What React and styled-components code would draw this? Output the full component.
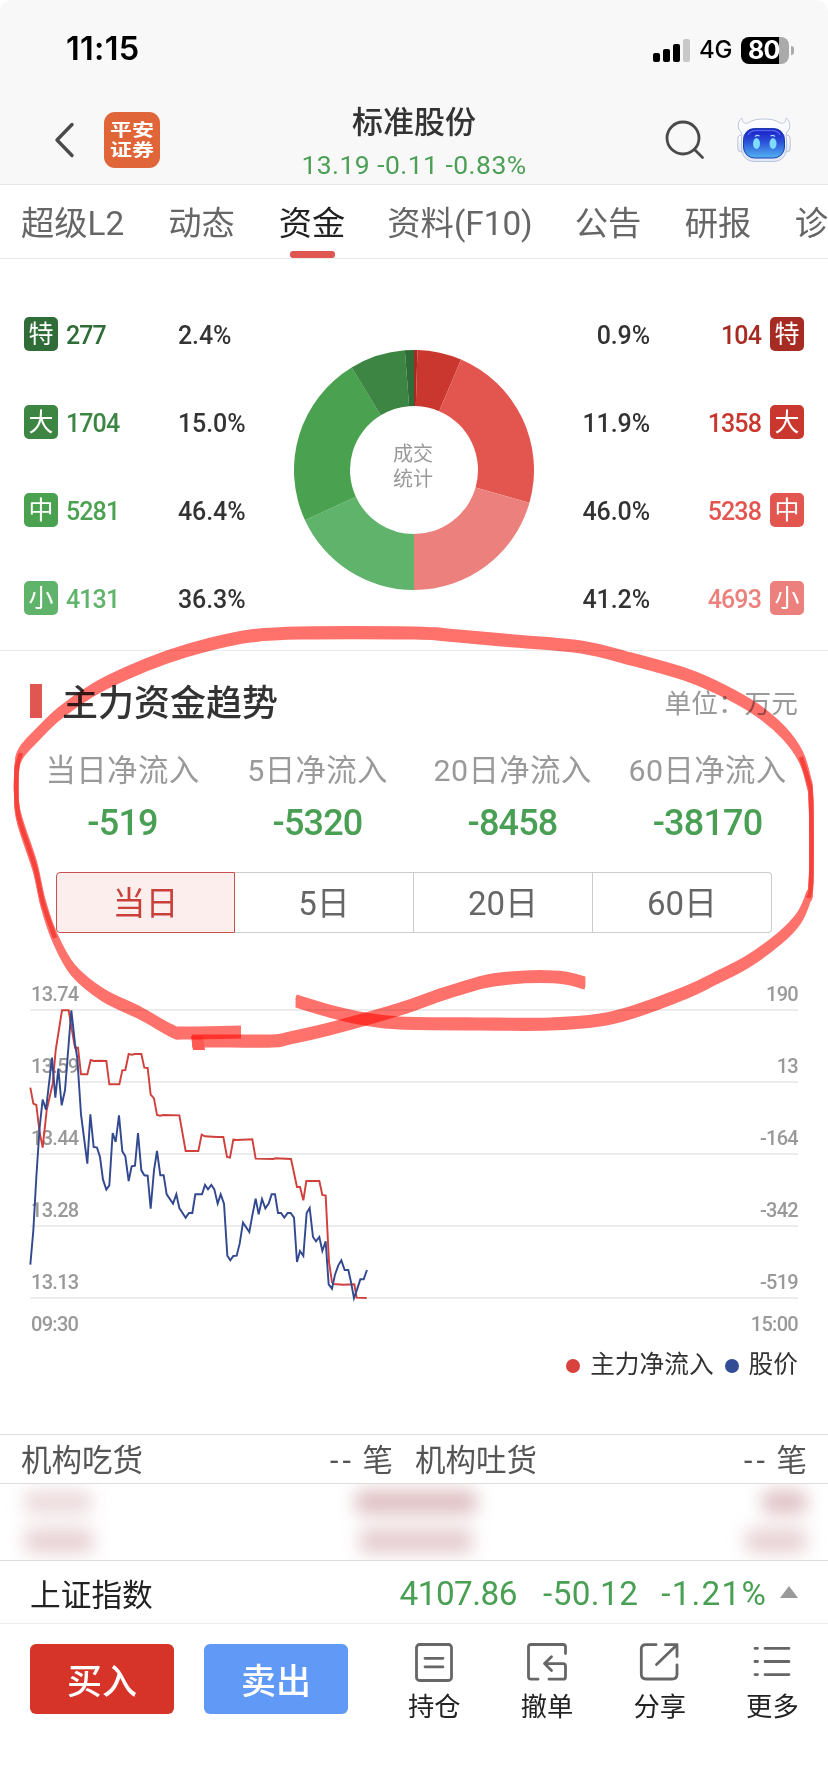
import React from 'react';
// Vendor
import styled, { createGlobalStyle } from 'styled-components';

const GlobalStyle = createGlobalStyle`
  * {
    box-sizing: border-box;
  }
  body {
    margin: 0;
    background: #fff;
    color: #333;
    font-family: Roboto, 'Noto Sans CJK SC', sans-serif;
  }
`;

const Screen = styled.div`
  position: relative;
  display: flex;
  flex-direction: column;
  width: 828px;
  height: 1792px;
  overflow: hidden;
  background: #fff;
  white-space: nowrap;
`;

// Status bar
const StatusBar = styled.div`
  display: flex;
  align-items: center;
  justify-content: space-between;
  height: 100px;
  padding: 0 34px 0 66px;
  background: #f8f8f8;
  border-radius: 12px 12px 0 0;
  color: #000;
  font-family: Inter, sans-serif;
`;

const Clock = styled.span`
  padding-bottom: 1px;
  font-size: 32.5px;
  font-weight: 600;
  line-height: 1;
  letter-spacing: 0.3px;
`;

const StatusIcons = styled.div`
  display: flex;
  align-items: center;
  gap: 9px;
`;

const Signal = styled.div`
  display: flex;
  align-items: flex-end;
  gap: 3px;
  height: 23px;
`;

const SignalBar = styled.i`
  width: 7px;
  height: ${(p) => p.$h}px;
  border-radius: 2px;
  background: ${(p) => (p.$off ? '#c8c8c8' : '#000')};
`;

const Network = styled.span`
  width: 33px;
  font-size: 24px;
  font-weight: 500;
  line-height: 1;
  letter-spacing: -0.3px;
`;

const Battery = styled.div`
  display: flex;
  align-items: center;
  gap: 2px;
`;

const BatteryBody = styled.div`
  width: 48px;
  height: 27px;
  padding-left: 7px;
  border-radius: 8px;
  background: linear-gradient(90deg, #000 38px, #aaa 38px);
  color: #fff;
  font-size: 25px;
  font-weight: 700;
  line-height: 27px;
  letter-spacing: -0.8px;
`;

const BatteryTip = styled.i`
  width: 3px;
  height: 9px;
  border-radius: 0 4px 4px 0;
  background: #aaa;
`;

// Navigation
const NavBar = styled.div`
  display: grid;
  grid-template-columns: 1fr auto 1fr;
  height: 85px;
  padding: 0 37px 0 53px;
  border-bottom: 1px solid #e6e6e6;
  background: #f8f8f8;
`;

const NavSide = styled.div`
  display: flex;
  align-items: center;
  justify-content: ${(p) => (p.$end ? 'flex-end' : 'flex-start')};
  gap: ${(p) => (p.$end ? 31 : 28)}px;
  height: 80px;
`;

const Logo = styled.div`
  display: flex;
  flex-direction: column;
  align-items: center;
  justify-content: center;
  width: 56px;
  height: 56px;
  border-radius: 11px;
  background: #e0663a;
`;

const LogoText = styled.div`
  color: #fff;
  font-size: 22px;
  font-weight: 700;
  line-height: 25px;
  transform: scaleY(0.8);
`;

const TitleBlock = styled.div`
  display: flex;
  flex-direction: column;
  align-items: center;
  margin-left: -16px;
  padding-top: 2px;
`;

const StockName = styled.div`
  font-size: 31px;
  font-weight: 500;
  line-height: 42px;
`;

const StockQuote = styled.div`
  color: #4b9f56;
  font-size: 26.5px;
  line-height: 42px;
  letter-spacing: 0.45px;
`;

// Tabs
const Tabs = styled.div`
  display: flex;
  gap: 44px;
  height: 74px;
  padding-left: 21px;
  border-bottom: 1px solid #ebebeb;
`;

const Tab = styled.div`
  display: flex;
  flex-direction: column;
  align-items: center;
  flex: none;
  width: ${(p) => p.$w}px;
  height: 73px;
  color: ${(p) => (p.$active ? '#222' : '#666')};
  font-size: 33.3px;
  line-height: 78px;
`;

const TabLine = styled.i`
  width: 45px;
  height: 7px;
  margin-top: -12px;
  border-radius: 3px;
  background: #e05650;
`;

// Deal statistics
const DealPanel = styled.div`
  display: grid;
  grid-template-columns: 270px 240px 1fr;
  height: 392px;
  padding: 31px 24px 0;
  border-bottom: 1px solid #ebebeb;
`;

const DealColumn = styled.div`
  display: flex;
  flex-direction: column;
`;

const DealRow = styled.div`
  display: flex;
  flex-direction: ${(p) => (p.$right ? 'row-reverse' : 'row')};
  align-items: center;
  height: 88px;
`;

const Badge = styled.span`
  width: 34px;
  height: 34px;
  border-radius: 5px;
  background: ${(p) => p.$color};
  color: #fff;
  font-size: 25px;
  line-height: 35px;
  text-align: center;
`;

const DealCount = styled.span`
  width: 103px;
  margin: 0 9px 0 8px;
  padding-top: 2px;
  color: ${(p) => p.$color};
  font-size: 25px;
  font-weight: 500;
  letter-spacing: -0.9px;
  text-align: ${(p) => (p.$right ? 'right' : 'left')};
`;

const DealRate = styled.span`
  padding-top: 2px;
  color: #333;
  font-size: 25px;
  font-weight: 500;
  letter-spacing: -0.1px;
`;

const DonutBox = styled.div`
  display: grid;
  place-items: center;
  height: 240px;
  margin-top: 60px;

  > * {
    grid-area: 1 / 1;
  }
`;

const DonutLabel = styled.div`
  margin: -7px 2px 0 0;
  color: #999;
  font-size: 20px;
  line-height: 25px;
  text-align: center;
`;

// Fund trend
const TrendHead = styled.div`
  display: flex;
  align-items: center;
  height: 100px;
  padding: 0 30px;
`;

const Mark = styled.i`
  width: 12px;
  height: 34px;
  margin-right: 20px;
  background: #e05650;
`;

const TrendTitle = styled.h2`
  flex: 1;
  margin: 0;
  padding-bottom: 3px;
  color: #333;
  font-size: 36px;
  font-weight: 500;
`;

const Unit = styled.span`
  color: #999;
  font-size: 26.7px;
`;

const Stats = styled.div`
  display: grid;
  grid-template-columns: repeat(4, 1fr);
  height: 121px;
  padding: 1px 23px 0 25px;
  text-align: center;
`;

const StatLabel = styled.div`
  color: #999;
  font-size: 30.4px;
  line-height: 38px;
  letter-spacing: 0.4px;
`;

const StatValue = styled.div`
  color: #499f54;
  font-size: 36px;
  font-weight: 500;
  line-height: 66px;
  letter-spacing: -0.8px;
`;

const Periods = styled.div`
  display: grid;
  grid-template-columns: repeat(4, 179px);
  height: 61px;
  margin: 0 56px;
`;

const Period = styled.button`
  margin: 0;
  padding: 0 0 4px;
  border: 1px solid ${(p) => (p.$active ? '#c9524e' : '#ccc')};
  border-left-width: ${(p) => (p.$active ? 1 : 0)}px;
  border-radius: ${(p) => (p.$active ? '4px 0 0 4px' : 0)};
  background: ${(p) => (p.$active ? '#fbeeed' : '#fff')};
  color: ${(p) => (p.$active ? '#c9403b' : '#666')};
  font: 400 33px Roboto, 'Noto Sans CJK SC', sans-serif;

  &:last-child {
    border-radius: 0 4px 4px 0;
  }
`;

// Chart
const Chart = styled.div`
  position: relative;
  margin: 6px 30px 0;
`;

const GridRow = styled.div`
  display: flex;
  align-items: flex-end;
  justify-content: space-between;
  height: 72px;
  padding: 0 0 3px 1px;
  border-bottom: 2px solid #ececec;
  color: #999;
  font-size: 20px;
  font-weight: 500;
  letter-spacing: -0.7px;
`;

const Lines = styled.svg`
  position: absolute;
  left: 0;
  top: 71px;
  overflow: visible;
`;

const TimeRow = styled.div`
  display: flex;
  justify-content: space-between;
  padding: 0 0 0 1px;
  color: #999;
  font-size: 20px;
  font-weight: 500;
  line-height: 51px;
  letter-spacing: -0.7px;
`;

const Legend = styled.div`
  display: flex;
  align-items: center;
  justify-content: flex-end;
  height: 32px;
  color: #333;
  font-size: 24.7px;
  line-height: 30px;
`;

const LegendText = styled.span`
  padding-bottom: 2px;
`;

const Dot = styled.i`
  width: 14px;
  height: 14px;
  margin: 0 10px 0 11px;
  border-radius: 50%;
  background: ${(p) => p.$color};
`;

// Institution rows
const InstRow = styled.div`
  display: grid;
  grid-template-columns: 372px 1fr;
  gap: 22px;
  height: 50px;
  margin-top: 52px;
  padding: 0 21px;
  border-top: 1px solid #ddd;
  border-bottom: 1px solid #ddd;
  color: #555;
  font-size: 30.5px;
  line-height: 51px;
`;

const InstCell = styled.div`
  display: flex;
  justify-content: space-between;
`;

const Dashes = styled.span`
  letter-spacing: 4px;
`;

const Masked = styled.div`
  display: flex;
  flex-direction: column;
  justify-content: space-between;
  height: 76px;
  padding: 6px 21px 7px 24px;
  overflow: hidden;
`;

const MaskedRow = styled.div`
  display: grid;
  grid-template-columns: 1fr auto 1fr;
  align-items: center;
`;

const Smudge = styled.i`
  justify-self: ${(p) => p.$at || 'start'};
  width: ${(p) => p.$w}px;
  height: 24px;
  border-radius: 8px;
  background: rgba(176, 100, 108, ${(p) => p.$a});
  filter: blur(9px);
`;

// Index line
const IndexRow = styled.div`
  display: flex;
  align-items: center;
  height: 64px;
  padding: 0 30px;
  border-top: 1px solid #ddd;
  border-bottom: 1px solid #ebebeb;
`;

const IndexName = styled.span`
  flex: 1;
  color: #222;
  font-size: 30.7px;
`;

const IndexValue = styled.span`
  margin-right: ${(p) => p.$gap}px;
  padding-top: 2px;
  color: #499f54;
  font-size: 33.3px;
  letter-spacing: ${(p) => p.$spacing}px;
`;

const Caret = styled.i`
  border: 9px solid transparent;
  border-top: 0;
  border-bottom: 12px solid #999;
`;

// Bottom bar
const BottomBar = styled.div`
  display: flex;
  padding: 20px 0 0 30px;
`;

const TradeButton = styled.button`
  flex: none;
  width: 144px;
  height: 70px;
  margin-right: 30px;
  padding: 0 0 2px;
  border: 0;
  border-radius: 6px;
  background: ${(p) => p.$color};
  color: #fff;
  font: 500 35px 'Noto Sans CJK SC', sans-serif;
`;

const Actions = styled.div`
  display: flex;
`;

const Action = styled.div`
  display: flex;
  flex-direction: column;
  align-items: center;
  flex: none;
  width: 112.7px;
  margin-top: -6px;
  color: #222;
  font-size: 26.3px;
  line-height: 42px;
`;

const Marker = styled.svg`
  position: absolute;
  left: 0;
  top: 0;
  mix-blend-mode: multiply;
  pointer-events: none;
`;

const tabs = [
  { name: '超级L2', w: 103 },
  { name: '动态', w: 67 },
  { name: '资金', w: 66, active: true },
  { name: '资料(F10)', w: 142 },
  { name: '公告', w: 66 },
  { name: '研报', w: 66 },
  { name: '诊', w: 33 },
];

const sells = [
  { tag: '特', count: 277, rate: '2.4%', color: '#2f6c38' },
  { tag: '大', count: 1704, rate: '15.0%', color: '#3d8542' },
  { tag: '中', count: 5281, rate: '46.4%', color: '#4aa14f' },
  { tag: '小', count: 4131, rate: '36.3%', color: '#5fb36a' },
];

const buys = [
  { tag: '特', count: 104, rate: '0.9%', color: '#a62b23' },
  { tag: '大', count: 1358, rate: '11.9%', color: '#c9372f' },
  { tag: '中', count: 5238, rate: '46.0%', color: '#e35650' },
  { tag: '小', count: 4693, rate: '41.2%', color: '#ec807c' },
];

const stats = [
  ['当日净流入', '-519'],
  ['5日净流入', '-5320'],
  ['20日净流入', '-8458'],
  ['60日净流入', '-38170'],
];

const axis = [
  ['13.74', '190'],
  ['13.59', '13'],
  ['13.44', '-164'],
  ['13.28', '-342'],
  ['13.13', '-519'],
];

const inflow =
  '91,382 100,430 109,434 118,510 128,562 140,450 158,370 167,270 186,150 206,150 215,205 225,262 234,262 243,342 262,342 272,299 281,302 300,301 319,302 328,372 358,372 367,330 376,329 386,281 395,283 405,281 424,281 433,322 443,323 452,403 462,414 471,464 480,466 490,464 538,465 557,572 595,572 605,523 615,528 650,530 670,530 681,590 690,592 700,538 710,539 757,537 767,595 820,596 826,594 873,596 891,680 900,680 910,720 919,662 958,662 967,704 977,706 987,905 996,965 1001,971 1030,973 1063,972 1070,1012 1100,1013';

const price =
  '91,913 100,810 109,650 119,500 128,418 138,448 156,292 166,412 175,325 185,435 195,390 214,150 225,250 232,295 243,462 262,610 271,462 281,560 291,562 300,590 309,658 319,688 328,675 338,518 347,545 357,465 367,573 376,588 386,662 395,618 405,616 414,518 424,630 433,645 443,646 452,745 462,630 471,572 481,645 491,645 500,702 519,730 529,702 538,743 557,772 567,758 577,758 586,702 606,702 615,674 624,687 634,674 643,687 653,730 662,702 672,730 682,886 691,900 700,887 710,886 719,850 729,787 748,815 758,760 767,715 776,762 786,716 796,744 806,730 815,702 825,702 834,758 843,758 853,772 863,758 872,758 882,772 891,905 900,872 910,887 920,758 929,743 939,830 948,843 958,830 967,872 977,843 986,972 996,985 1005,943 1015,915 1024,900 1034,929 1045,929 1053,965 1062,1014 1072,985 1081,957 1091,957 1101,929';

const loop = [
  [296, 1001], [333, 1012], [365, 1019], [400, 1023], [480, 1024], [550, 1024], [600, 1020],
  [633, 1012], [687, 992], [714, 979], [747, 962], [780, 938], [799, 918], [808, 898],
  [811, 883], [811, 800], [809, 783], [801, 757], [784, 733], [757, 710], [724, 691],
  [687, 675], [631, 659], [581, 647], [514, 641], [447, 635], [414, 633], [300, 633],
  [250, 636], [207, 645], [167, 657], [127, 673], [93, 690], [60, 713], [37, 735],
  [21, 753], [16.7, 770], [17, 807], [22, 828], [35, 867], [43, 903], [55, 938],
  [73, 970], [103, 995], [140, 1013], [172, 1031], [184, 1033], [241, 1032],
];

const tail = [
  [192, 1041], [230, 1041], [273, 1041], [290, 1038], [333, 1028], [400, 1009],
  [440, 995], [483, 982], [510, 978], [540, 976.5], [565, 978], [585, 983],
];

// Catmull-Rom spline through the points
function smooth(pts) {
  let d = `M${pts[0]}`;
  for (let i = 0; i < pts.length - 1; i++) {
    const a = pts[i - 1] || pts[i];
    const b = pts[i];
    const c = pts[i + 1];
    const e = pts[i + 2] || c;
    d += `C${b[0] + (c[0] - a[0]) / 6},${b[1] + (c[1] - a[1]) / 6} ${c[0] - (e[0] - b[0]) / 6},${c[1] - (e[1] - b[1]) / 6} ${c}`;
  }
  return d;
}

// Flat pen nib: tall and narrow, so upright parts come out thin
function Nib({ points, children }) {
  const d = smooth(points);
  return (
    <Marker width="828" height="1792" fill="none" stroke="#ff726c" strokeWidth="4.4">
      {[-4.4, -3, -1.5, 0, 1.5, 3, 4.4].map((dy) => (
        <path key={dy} d={d} transform={`translate(0 ${dy})`} />
      ))}
      {children}
    </Marker>
  );
}

function slice(from, to, r1, r2) {
  const at = (deg, r) => {
    const a = (deg * Math.PI) / 180;
    return `${120 + r * Math.sin(a)},${120 - r * Math.cos(a)}`;
  };
  return `M${at(from, r2)}A${r2},${r2} 0 0 1 ${at(to, r2)}L${at(to, r1)}A${r1},${r1} 0 0 0 ${at(from, r1)}Z`;
}

function Donut() {
  const parts = [...buys, ...[...sells].reverse()];
  const total = parts.reduce((sum, p) => sum + p.count, 0);
  let angle = 0;
  return (
    <svg width="240" height="240">
      {parts.map((p) => {
        const from = angle;
        angle += (p.count / total) * 360;
        return <path key={p.color} d={slice(from, angle, 64, 120)} fill={p.color} />;
      })}
    </svg>
  );
}

function Deals({ items, right }) {
  return (
    <DealColumn>
      {items.map((d) => (
        <DealRow key={d.tag} $right={right}>
          <Badge $color={d.color}>{d.tag}</Badge>
          <DealCount $color={d.color} $right={right}>{d.count}</DealCount>
          <DealRate>{d.rate}</DealRate>
        </DealRow>
      ))}
    </DealColumn>
  );
}

function Robot() {
  return (
    <svg width="54" height="46" viewBox="0 0 54 46">
      <defs>
        <linearGradient id="face" x1="0" y1="0" x2="0" y2="1">
          <stop offset="0" stopColor="#1a18c4" />
          <stop offset="0.45" stopColor="#2a50d8" />
          <stop offset="1" stopColor="#52b4f2" />
        </linearGradient>
        <linearGradient id="shell" x1="0" y1="0" x2="0" y2="1">
          <stop offset="0" stopColor="#fff" />
          <stop offset="1" stopColor="#dfe6f5" />
        </linearGradient>
      </defs>
      <g fill="url(#shell)" stroke="#b5bfd6" strokeWidth="0.9">
        <rect x="0.8" y="18" width="8" height="17" rx="3.5" />
        <rect x="45.2" y="18" width="8" height="17" rx="3.5" />
        <path d="M5 1C1 4 0 10 3 14C5 16 5 18 4.500 22V31C5 40 10 44.500 18 44.500H36C44 44.500 49 40 49.500 31V22C49 18 49 16 51 14C54 10 53 4 49 1C49 5 47 7 43 6C39 3 34 2 27 2S15 3 11 6C7 7 5 5 5 1Z" />
      </g>
      <rect x="6.500" y="11.500" width="41" height="29.500" rx="11" fill="url(#face)" stroke="#1c3fae" strokeWidth="1" />
      <path d="M11 18Q13 13.500 19 13.500H35Q41 13.500 43 18" fill="none" stroke="#5266ee" strokeWidth="1.500" />
      <ellipse cx="19.500" cy="26.500" rx="3.500" ry="5.400" fill="#7fdcff" />
      <ellipse cx="36" cy="26.500" rx="3.500" ry="5.400" fill="#7fdcff" />
      <path d="M18 19.500Q20 17.500 22.500 19M33.500 19Q36 17.500 38 19.500" fill="none" stroke="#a8d4ff" strokeWidth="1.300" />
    </svg>
  );
}

function ActionIcon({ children }) {
  return (
    <svg width="48" height="48" fill="none" stroke="#666" strokeWidth="2.8" strokeLinecap="round" strokeLinejoin="round">
      {children}
    </svg>
  );
}

function App() {
  return (
    <Screen>
      <GlobalStyle />
      <StatusBar>
        <Clock>11:15</Clock>
        <StatusIcons>
          <Signal>
            <SignalBar $h={9} />
            <SignalBar $h={13} />
            <SignalBar $h={18} />
            <SignalBar $h={23} $off />
          </Signal>
          <Network>4G</Network>
          <Battery>
            <BatteryBody>80</BatteryBody>
            <BatteryTip />
          </Battery>
        </StatusIcons>
      </StatusBar>

      <NavBar>
        <NavSide>
          <svg width="23" height="40" fill="none" stroke="#4a4a4a" strokeWidth="3.4" strokeLinecap="round" strokeLinejoin="round">
            <path d="M19 4.500L4 20L19 35.500" />
          </svg>
          <Logo>
            <LogoText>
              平安
              <br />
              证券
            </LogoText>
          </Logo>
        </NavSide>
        <TitleBlock>
          <StockName>标准股份</StockName>
          <StockQuote>13.19 -0.11 -0.83%</StockQuote>
        </TitleBlock>
        <NavSide $end>
          <svg width="42" height="42" fill="none" stroke="#4a4a4a" strokeWidth="2.8" strokeLinecap="round">
            <circle cx="19" cy="19" r="16" />
            <path d="M30.500 30.500L38.500 38.500" />
          </svg>
          <Robot />
        </NavSide>
      </NavBar>

      <Tabs>
        {tabs.map((t) => (
          <Tab key={t.name} $w={t.w} $active={t.active}>
            {t.name}
            {t.active && <TabLine />}
          </Tab>
        ))}
      </Tabs>

      <DealPanel>
        <Deals items={sells} />
        <DonutBox>
          <Donut />
          <DonutLabel>
            成交
            <br />
            统计
          </DonutLabel>
        </DonutBox>
        <Deals items={buys} right />
      </DealPanel>

      <TrendHead>
        <Mark />
        <TrendTitle>主力资金趋势</TrendTitle>
        <Unit>单位：万元</Unit>
      </TrendHead>
      <Stats>
        {stats.map(([label, value]) => (
          <div key={label}>
            <StatLabel>{label}</StatLabel>
            <StatValue>{value}</StatValue>
          </div>
        ))}
      </Stats>
      <Periods>
        <Period $active>当日</Period>
        <Period>5日</Period>
        <Period>20日</Period>
        <Period>60日</Period>
      </Periods>

      <Chart>
        {axis.map(([left, right]) => (
          <GridRow key={left}>
            <span>{left}</span>
            <span>{right}</span>
          </GridRow>
        ))}
        <Lines width="768" height="290" fill="none" strokeWidth="5.8">
          <g transform="scale(0.33333) translate(-90 -149)">
            <polyline points={inflow} stroke="#d0403c" />
            <polyline points={price} stroke="#32498f" />
          </g>
        </Lines>
        <TimeRow>
          <span>09:30</span>
          <span>15:00</span>
        </TimeRow>
        <Legend>
          <Dot $color="#d9413c" />
          <LegendText>主力净流入</LegendText>
          <Dot $color="#324c96" />
          <LegendText>股价</LegendText>
        </Legend>
      </Chart>

      <InstRow>
        <InstCell>
          <span>机构吃货</span>
          <span>
            <Dashes>--</Dashes> 笔
          </span>
        </InstCell>
        <InstCell>
          <span>机构吐货</span>
          <span>
            <Dashes>--</Dashes> 笔
          </span>
        </InstCell>
      </InstRow>
      <Masked>
        <MaskedRow>
          <Smudge $w={68} $a={0.24} />
          <Smudge $w={122} $a={0.42} />
          <Smudge $w={45} $a={0.4} $at="end" />
        </MaskedRow>
        <MaskedRow>
          <Smudge $w={70} $a={0.3} />
          <Smudge $w={114} $a={0.34} />
          <Smudge $w={62} $a={0.3} $at="end" />
        </MaskedRow>
      </Masked>

      <IndexRow>
        <IndexName>上证指数</IndexName>
        <IndexValue $gap={26} $spacing={-0.5}>4107.86</IndexValue>
        <IndexValue $gap={23} $spacing={0.4}>-50.12</IndexValue>
        <IndexValue $gap={13} $spacing={1.2}>-1.21%</IndexValue>
        <Caret />
      </IndexRow>

      <BottomBar>
        <TradeButton $color="#d63429">买入</TradeButton>
        <TradeButton $color="#6199f7">卖出</TradeButton>
        <Actions>
          <Action>
            <ActionIcon>
              <rect x="6.500" y="6.500" width="35" height="36" rx="3" />
              <path d="M15 20.300H33M15 28.800H33" />
            </ActionIcon>
            持仓
          </Action>
          <Action>
            <ActionIcon>
              <path d="M42.500 15.500V9Q42.500 6.500 40 6.500H8Q5.500 6.500 5.500 9V38.500Q5.500 41.200 8 41.200H15M26 41.200H40Q42.500 41.200 42.500 38.700V28Q42.500 25.600 40 25.600H21.500M28.500 18.800L21.500 25.600L28.500 32.400" />
            </ActionIcon>
            撤单
          </Action>
          <Action>
            <ActionIcon>
              <path d="M20 6.700H10Q5.300 6.700 5.300 11V36Q5.300 41 10 41H36Q41 41 41 36.500V27M20.500 26.500L41 6.700M29.500 6.700H41V18.500" />
            </ActionIcon>
            分享
          </Action>
          <Action>
            <ActionIcon>
              <path d="M7 10.300H9.500M17 10.300H41M7 23.500H9.500M17 23.500H41M7 36.600H9.500M17 36.600H41" />
            </ActionIcon>
            更多
          </Action>
        </Actions>
      </BottomBar>

      <Nib points={loop}>
        <path d={smooth(loop.slice(13, 18))} stroke="#f6423b" />
        <path d={smooth(loop.slice(35, 42))} stroke="#f6423b" />
      </Nib>
      <Nib points={tail}>
        <path d="M191 1036H203L205 1050H193Z" fill="#ff5a53" stroke="none" />
      </Nib>
    </Screen>
  );
}

export default App;
